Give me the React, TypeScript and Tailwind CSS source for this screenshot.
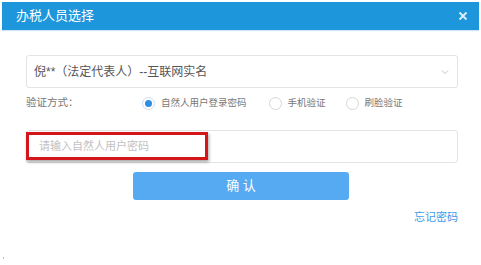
import React from 'react';

const font = { fontFamily: '"Liberation Sans", "Noto Sans CJK SC", sans-serif' };

const Radio = ({ checked, label }: { checked?: boolean; label: string }) => (
  <label className="flex items-center gap-[6px]">
    <span
      className={
        checked
          ? 'flex h-[13px] w-[13px] items-center justify-center rounded-full border border-[#c7def3] bg-white'
          : 'h-[13px] w-[13px] rounded-full border border-[#d6d6d6] bg-white'
      }
    >
      {checked && <span className="h-[7px] w-[7px] rounded-full bg-[#2d8fe0]"></span>}
    </span>
    <span className="text-[9.5px] text-[#777]">{label}</span>
  </label>
);

export default function App() {
  return (
    <div className="relative h-[265px] w-[481px] bg-white" style={font}>
      {/* Header */}
      <div className="mx-[2px] pt-[2px]">
        <div className="flex h-[28px] items-center justify-between bg-[#1d96dc] pl-[14px] pr-[11px] shadow-[0_1px_1px_#cfe6f5]">
          <span className="text-[13px] text-white">办税人员选择</span>
          <svg width="10" height="10" viewBox="0 0 10 10">
            <path d="M1.5 1.5 L8.5 8.5 M8.5 1.5 L1.5 8.5" stroke="#dff0fb" strokeWidth="1.8" />
          </svg>
        </div>
      </div>

      <div className="pl-[26px] pr-[23px] pt-[25px]">
        {/* Select */}
        <div className="flex h-[33px] items-center justify-between rounded-[3px] border border-[#e3e3e3] pl-[7px] pr-[8px]">
          <span className="text-[12px] text-[#555]">倪**（法定代表人）--互联网实名</span>
          <svg width="8" height="6" viewBox="0 0 8 6">
            <path d="M1 1.5 L4 4.5 L7 1.5" stroke="#c4c4c4" strokeWidth="1" fill="none" />
          </svg>
        </div>

        {/* Verification method */}
        <div className="mt-[5px] flex h-[20px] items-center">
          <span className="w-[116px] text-[10.5px] text-[#777]">验证方式：</span>
          <div className="flex items-center">
            <Radio checked label="自然人用户登录密码" />
            <div className="ml-[22px]">
              <Radio label="手机验证" />
            </div>
            <div className="ml-[20px]">
              <Radio label="刷脸验证" />
            </div>
          </div>
        </div>

        {/* Password input */}
        <div className="mt-[17px] flex h-[33px] items-center rounded-[3px] border border-[#e3e3e3] pl-[12px]">
          <span className="text-[11px] text-[#c2c2c2]">请输入自然人用户密码</span>
        </div>

        {/* Confirm button */}
        <div className="mt-[9px] flex justify-center pr-[2px]">
          <button className="flex h-[28px] w-[216px] items-center justify-center rounded-[3px] bg-[#55aaf2] text-[13px] text-white">
            确&nbsp;认
          </button>
        </div>

        <div className="mt-[9px] flex justify-end">
          <span className="text-[11px] text-[#3d9ae6]">忘记密码</span>
        </div>
      </div>

      {/* Red highlight annotation */}
      <div className="absolute left-[26px] top-[132px] h-[28px] w-[182px] border-[3px] border-[#d4161a] shadow-[1px_2px_3px_rgba(0,0,0,0.35)]"></div>

      <span className="absolute left-[3px] top-[257px] h-[2px] w-[1px] bg-[#bbb]"></span>
    </div>
  );
}
